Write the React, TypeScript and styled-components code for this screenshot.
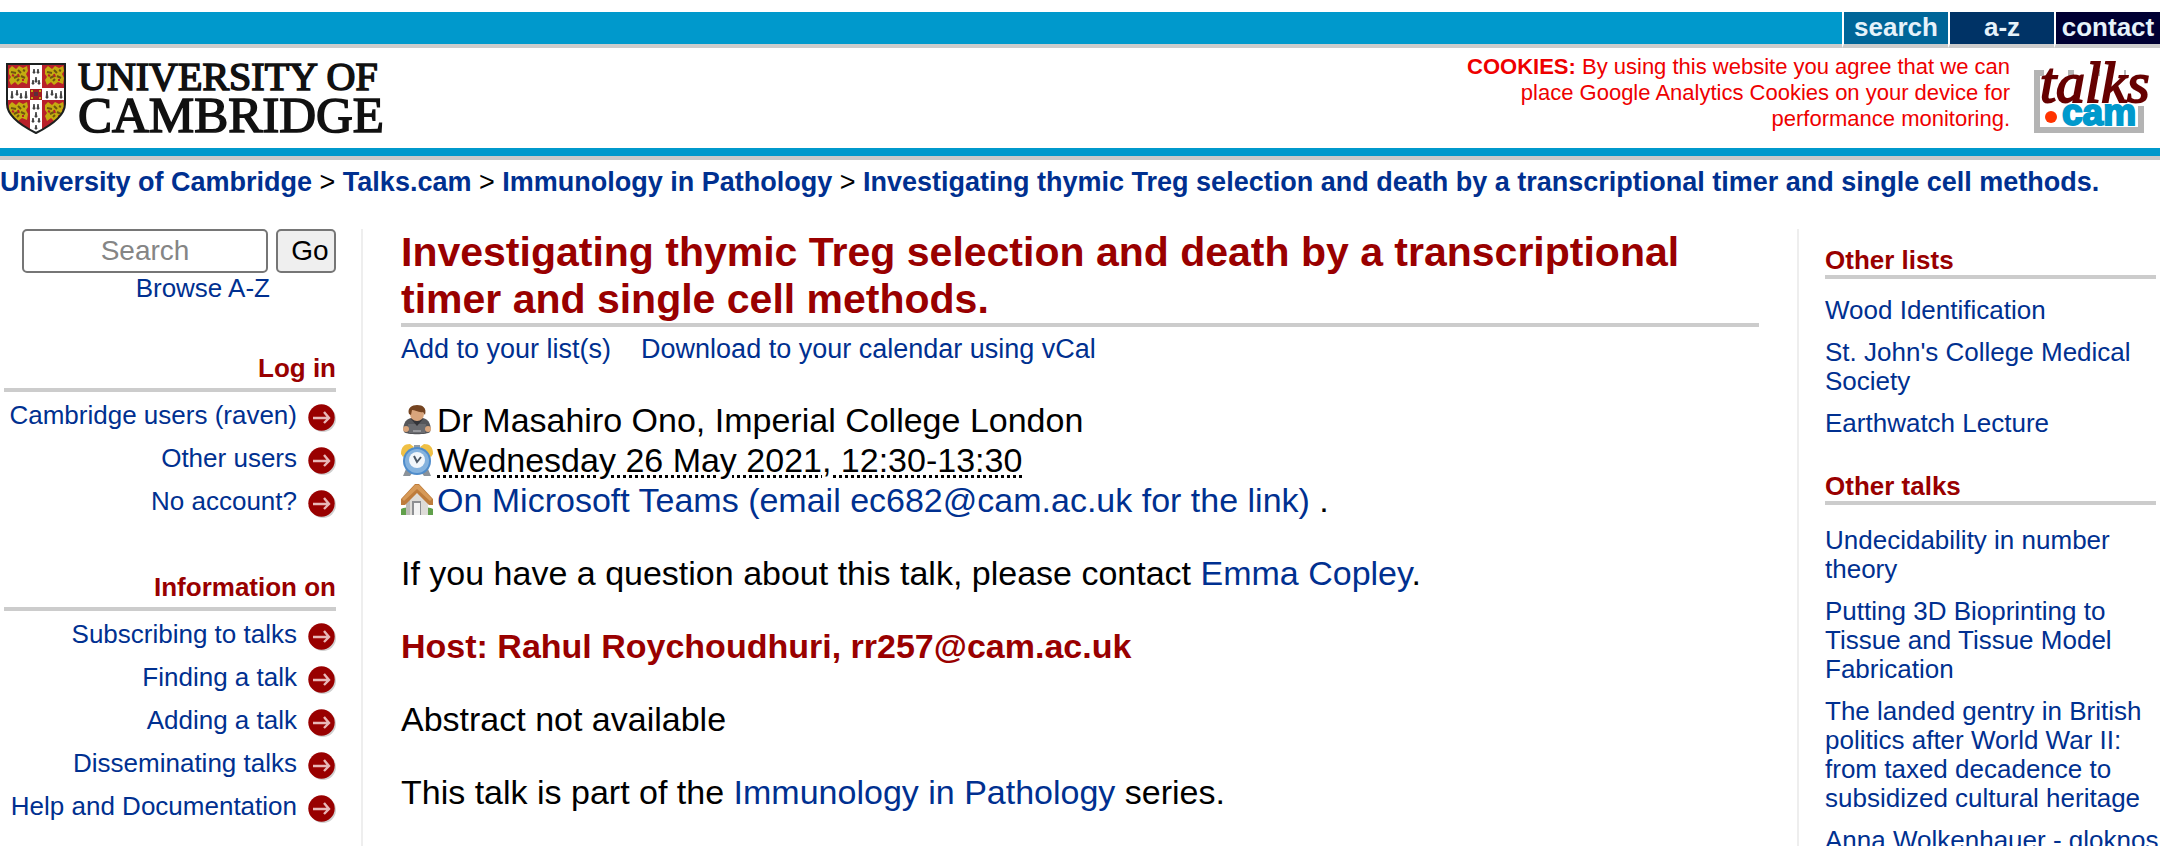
import React from "react";
import styled, { createGlobalStyle } from "styled-components";

const LINK = "#003090";
const RED = "#990000";
const RULE = "#cccccc";
const CYAN = "#0099cc";

const GlobalStyle = createGlobalStyle`
  * { box-sizing: border-box; }
  html, body { margin: 0; background: #fff; }
  body {
    padding: 12px 4px 0 0;
    color: #000;
    font-family: "Liberation Sans", Arial, sans-serif;
    font-size: 34px;
    line-height: 39px;
    min-height: 100vh;
    overflow: hidden;
  }
  h1, h2, h3, p, ul { margin: 0; padding: 0; }
  ul { list-style: none; }
  a { color: ${LINK}; text-decoration: none; }
  svg { display: block; flex: none; }
`;

const TopBar = styled.nav`
  display: flex;
  justify-content: flex-end;
  height: 36px;
  background: ${CYAN};
  border-bottom: 4px solid ${RULE};
`;

const Tab = styled.a<{ $bg: string }>`
  width: 106px;
  height: 36px;
  border-left: 2px solid #fff;
  border-bottom: 4px solid ${RULE};
  background: ${(p) => p.$bg};
  color: #e6f2fa;
  font-size: 26px;
  line-height: 30px;
  font-weight: bold;
  text-align: center;
`;

const Masthead = styled.header`
  display: flex;
  justify-content: space-between;
  align-items: flex-start;
  height: 112px;
  padding-right: 10px;
  border-bottom: 4px solid #c9c9c9;
  box-shadow: inset 0 -8px 0 ${CYAN};
`;

const MastheadRight = styled.div`
  display: flex;
  align-items: flex-start;
  gap: 22px;
`;

const CookieNotice = styled.p`
  width: 560px;
  padding-top: 6px;
  color: #ee0000;
  font-size: 22px;
  line-height: 26px;
  text-align: right;
`;

const Breadcrumb = styled.nav`
  padding: 7px 0 31px;
  font-size: 27px;
  line-height: 31px;
  white-space: nowrap;
  a { font-weight: bold; }
`;

const Columns = styled.div`
  display: grid;
  grid-template-columns: 363px minmax(0, 1fr) 363px;
  min-height: calc(100vh - 229px);
`;

const LeftColumn = styled.aside`
  padding: 0 25px 0 4px;
  border-right: 2px solid #eeeeee;
  font-size: 26px;
  line-height: 29px;
  text-align: right;
`;

const SearchForm = styled.form`
  display: flex;
  gap: 8px;
  padding-left: 18px;
  margin-bottom: 1px;
`;

const SearchBox = styled.input`
  flex: 1;
  min-width: 0;
  height: 44px;
  border: 2px solid #767676;
  border-radius: 5px;
  background: #fff;
  font: 28px "Liberation Sans", Arial, sans-serif;
  text-align: center;
  &::placeholder { color: #858585; opacity: 1; }
`;

const GoButton = styled.button`
  width: 60px;
  height: 44px;
  padding: 0 4px 0 12px;
  border: 2px solid #767676;
  border-radius: 5px;
  background: #efefef;
  color: #000;
  font: 28px "Liberation Sans", Arial, sans-serif;
`;

const BrowseLink = styled.a`
  display: block;
  padding: 0 66px 3px 0;
`;

const MenuSection = styled.section`
  margin-top: 48px;
`;

const MenuHeading = styled.h3`
  padding-bottom: 5px;
  border-bottom: 4px solid ${RULE};
  color: ${RED};
  font-size: 26px;
  line-height: 29px;
`;

const MenuList = styled.ul`
  padding-top: 4px;
`;

const MenuLink = styled.a`
  display: flex;
  justify-content: flex-end;
  align-items: center;
  gap: 11px;
  height: 43px;
  span { padding-bottom: 5px; white-space: nowrap; }
`;

const Talk = styled.main`
  padding: 0 38px;
`;

const Title = styled.h1`
  border-bottom: 4px solid ${RULE};
  color: ${RED};
  font-size: 41px;
  line-height: 47px;
`;

const Actions = styled.div`
  display: flex;
  gap: 30px;
  margin: 7px 0 35px;
  font-size: 27px;
  line-height: 31px;
`;

const Details = styled.ul`
  margin-bottom: 34px;
`;

const Detail = styled.li`
  display: flex;
  align-items: center;
  gap: 4px;
  line-height: 40px;
`;

const When = styled.abbr`
  text-decoration: underline dotted;
  text-decoration-thickness: 3px;
  text-underline-offset: 3px;
`;

const Paragraph = styled.p<{ $host?: boolean }>`
  margin-bottom: 34px;
  color: ${(p) => (p.$host ? RED : "#000")};
  font-weight: ${(p) => (p.$host ? "bold" : "normal")};
`;

const RightColumn = styled.aside`
  padding: 17px 0 0 26px;
  border-left: 2px solid #eeeeee;
  font-size: 26px;
  line-height: 29px;
  height: 0;
  min-height: 100%;
  overflow: hidden;
`;

const ListHeading = styled.h3<{ $gap: number }>`
  margin: 0 4px ${(p) => p.$gap}px 0;
  border-bottom: 4px solid ${RULE};
  color: ${RED};
  font-size: 26px;
  line-height: 29px;
`;

const LinkList = styled.ul`
  display: flex;
  flex-direction: column;
  gap: 13px;
  margin-bottom: 34px;
`;

const UniversityLogo = () => (
  <svg width="400" height="96" viewBox="0 0 400 96" role="img" aria-label="University of Cambridge">
    <defs>
      <clipPath id="shield">
        <path d="M7 16H65V56C65 68 50 78 36 85C22 78 7 68 7 56Z" />
      </clipPath>
    </defs>
    <g clipPath="url(#shield)">
      <rect x="6" y="15" width="60" height="72" fill="#b8202a" />
      {[[9, 18], [45, 18], [9, 54], [45, 54]].map(([x, y]) => (
        <g key={`${x}-${y}`} transform={`translate(${x} ${y})`}>
          <path
            d="M0 3L3 0L7 3L10 0L14 2L18 0L19 5L17 8L19 12L18 18L13 16L9 19L6 16L2 19L0 14L2 11L0 8Z"
            fill="#c4ac10"
          />
          <path d="M2 6L7 7M9 4L12 7M5 12L9 10M12 10L16 12M8 15L10 13M14 4L16 5" stroke="#6e5410" strokeWidth="2" />
          <path d="M3 9L5 10M9 8L10 11M13 14L15 14" stroke="#b8202a" strokeWidth="2" />
        </g>
      ))}
      <path d="M30 15H42V87H30ZM6 40H66V52H6Z" fill="#fff" />
      <path
        d="M33 25L34 21L35 25ZM37 25L38 21L39 25ZM35 34L36 29L37 34ZM32 36L33 32L34 36ZM38 36L39 32L40 36ZM33 61L34 56L35 61ZM37 61L38 56L39 61ZM35 69L36 64L37 69ZM32 74L33 70L34 74ZM38 74L39 70L40 74ZM35 81L36 77L37 81ZM11 50L12 43L13 50ZM16 47L17 42L18 47ZM20 50L21 45L22 50ZM25 50L26 43L27 50ZM46 50L47 43L48 50ZM51 47L52 42L53 47ZM55 50L56 45L57 50ZM60 50L61 43L62 50Z"
        fill="#222"
        stroke="#444"
      />
      <rect x="30" y="41" width="12" height="11" fill="#a31c20" />
      <path d="M31 42H33V44H31ZM39 42H41V44H39ZM31 49H33V51H31ZM39 49H41V51H39Z" fill="#c4ac10" />
      <path d="M34 44H38V48H34Z" fill="#5c3038" />
    </g>
    <path d="M7 16H65V56C65 68 50 78 36 85C22 78 7 68 7 56Z" fill="none" stroke="#1c2020" strokeWidth="2" />
    <g fill="#111" stroke="#111" strokeWidth="1.6" fontFamily="'Liberation Serif', 'Times New Roman', serif">
      <text x="78" y="42" fontSize="40">UNIVERSITY OF</text>
      <text x="78" y="84" fontSize="51">CAMBRIDGE</text>
    </g>
  </svg>
);

const TalksLogo = () => (
  <svg width="118" height="96" viewBox="0 0 118 96" role="img" aria-label="talks.cam">
    <path d="M12 25H5V82H109V58M36 25H42M66 25H68M92 25H94" fill="none" stroke="#b4b4b4" strokeWidth="6" />
    <text
      x="8"
      y="54"
      fontFamily="'Liberation Serif', 'Times New Roman', serif"
      fontStyle="italic"
      fontSize="58"
      fill="#660000"
      stroke="#660000"
      strokeWidth="2"
    >
      talks
    </text>
    <circle cx="19" cy="69" r="6" fill="#ff3300" />
    <text
      x="30"
      y="77"
      fontFamily="'Liberation Sans', Arial, sans-serif"
      fontWeight="bold"
      fontSize="37"
      fill={CYAN}
      stroke={CYAN}
      strokeWidth="2"
    >
      cam
    </text>
  </svg>
);

const ArrowIcon = () => (
  <svg width="28" height="28" viewBox="0 0 28 28" aria-hidden="true">
    <circle cx="15" cy="15" r="13" fill="#d0d0d0" />
    <circle cx="13.5" cy="13.5" r="13.2" fill="#990000" />
    <path d="M5 14H21M16 8L21 14L16 19" fill="none" stroke="#e8b8b8" strokeWidth="2.4" />
  </svg>
);

const PersonIcon = () => (
  <svg width="32" height="32" viewBox="0 0 32 32" aria-hidden="true">
    <path d="M3 28C1 22 4 15 10 14H22C28 15 31 22 29 28C27 31 5 31 3 28Z" fill="#55565a" />
    <path d="M7 20L8 29H24L25 20" fill="#6b6c70" />
    <path d="M10 15L16 22L22 15Z" fill="#343438" />
    <circle cx="16" cy="10" r="7" fill="#d9a57c" />
    <path d="M8 10C6 4 11 1 16 1C22 1 26 4 24 11L22 8C18 9 14 6 11 6L10 11Z" fill="#754421" />
    <circle cx="5" cy="25" r="3" fill="#d9a57c" />
    <circle cx="27" cy="25" r="3" fill="#d9a57c" />
    <path d="M12 27H20" stroke="#97989c" strokeWidth="2" />
  </svg>
);

const ClockIcon = () => (
  <svg width="32" height="32" viewBox="0 0 32 32" aria-hidden="true">
    <path d="M5 25L2 32H9L12 28ZM27 25L30 32H23L20 28Z" fill="#8b9299" />
    <path d="M0 10C0 3 3 0 9 0L13 3L2 13ZM32 10C32 3 29 0 23 0L19 3L30 13Z" fill="#f0c045" />
    <path d="M13 1H19V5H13Z" fill="#8f9ba6" />
    <circle cx="16" cy="17" r="14" fill="#4f8ccb" />
    <circle cx="16" cy="17" r="12" fill="#84b2de" />
    <circle cx="16" cy="16" r="8" fill="#f1f6fb" />
    <path d="M13 12L16 18L20 13" fill="none" stroke="#4c5866" strokeWidth="2" />
  </svg>
);

const HouseIcon = () => (
  <svg width="32" height="32" viewBox="0 0 32 32" aria-hidden="true">
    <path d="M0 25C4 22 28 22 32 25V31H0Z" fill="#61a04b" />
    <path d="M5 15L16 5L27 15V31H5Z" fill="#dedcd8" />
    <path d="M5 16L9 13V31H5Z" fill="#bdbbb8" />
    <path d="M14 0H18L32 15V21H28L16 9L4 21H0V15Z" fill="#be7c3b" />
    <path d="M14 1H18L31 15L29 17L16 5L3 17L1 15Z" fill="#d79a58" />
    <path d="M11 17H20V31H11Z" fill="#8d8f92" />
    <path d="M13 19H19V31H13Z" fill="#f3f3f3" />
  </svg>
);

const menus = [
  { title: "Log in", items: ["Cambridge users (raven)", "Other users", "No account?"] },
  {
    title: "Information on",
    items: ["Subscribing to talks", "Finding a talk", "Adding a talk", "Disseminating talks", "Help and Documentation"],
  },
];

const lists = [
  { title: "Other lists", gap: 17, items: ["Wood Identification", "St. John's College Medical Society", "Earthwatch Lecture"] },
  {
    title: "Other talks",
    gap: 21,
    items: [
      "Undecidability in number theory",
      "Putting 3D Bioprinting to Tissue and Tissue Model Fabrication",
      "The landed gentry in British politics after World War II: from taxed decadence to subsidized cultural heritage",
      "Anna Wolkenhauer - gloknos",
    ],
  },
];

const talkTitle = "Investigating thymic Treg selection and death by a transcriptional timer and single cell methods.";

export default function App() {
  return (
    <>
      <GlobalStyle />
      <TopBar>
        <Tab href="#search" $bg="#006699">search</Tab>
        <Tab href="#a-z" $bg="#003366">a-z</Tab>
        <Tab href="#contact" $bg="#000033">contact</Tab>
      </TopBar>
      <Masthead>
        <a href="#university"><UniversityLogo /></a>
        <MastheadRight>
          <CookieNotice>
            <strong>COOKIES:</strong> By using this website you agree that we can place Google Analytics Cookies on your
            device for performance monitoring.
          </CookieNotice>
          <a href="#talks"><TalksLogo /></a>
        </MastheadRight>
      </Masthead>
      <Breadcrumb>
        <a href="#university">University of Cambridge</a> &gt; <a href="#talks">Talks.cam</a> &gt;{" "}
        <a href="#series">Immunology in Pathology</a> &gt; <a href="#talk">{talkTitle}</a>
      </Breadcrumb>
      <Columns>
        <LeftColumn>
          <SearchForm>
            <SearchBox type="text" placeholder="Search" aria-label="Search" />
            <GoButton type="button">Go</GoButton>
          </SearchForm>
          <BrowseLink href="#browse">Browse A-Z</BrowseLink>
          {menus.map((menu) => (
            <MenuSection key={menu.title}>
              <MenuHeading>{menu.title}</MenuHeading>
              <MenuList>
                {menu.items.map((item) => (
                  <li key={item}>
                    <MenuLink href="#menu">
                      <span>{item}</span>
                      <ArrowIcon />
                    </MenuLink>
                  </li>
                ))}
              </MenuList>
            </MenuSection>
          ))}
        </LeftColumn>
        <Talk>
          <Title>{talkTitle}</Title>
          <Actions>
            <a href="#add">Add to your list(s)</a>
            <a href="#vcal">Download to your calendar using vCal</a>
          </Actions>
          <Details>
            <Detail>
              <PersonIcon />
              <span>Dr Masahiro Ono, Imperial College London</span>
            </Detail>
            <Detail>
              <ClockIcon />
              <When>Wednesday 26 May 2021, 12:30-13:30</When>
            </Detail>
            <Detail>
              <HouseIcon />
              <span>
                <a href="#venue">On Microsoft Teams (email ec682@cam.ac.uk for the link)</a> .
              </span>
            </Detail>
          </Details>
          <Paragraph>
            If you have a question about this talk, please contact <a href="#organiser">Emma Copley</a>.
          </Paragraph>
          <Paragraph $host>Host: Rahul Roychoudhuri, rr257@cam.ac.uk</Paragraph>
          <Paragraph>Abstract not available</Paragraph>
          <Paragraph>
            This talk is part of the <a href="#series">Immunology in Pathology</a> series.
          </Paragraph>
        </Talk>
        <RightColumn>
          {lists.map((list) => (
            <section key={list.title}>
              <ListHeading $gap={list.gap}>{list.title}</ListHeading>
              <LinkList>
                {list.items.map((item) => (
                  <li key={item}><a href="#list">{item}</a></li>
                ))}
              </LinkList>
            </section>
          ))}
        </RightColumn>
      </Columns>
    </>
  );
}
